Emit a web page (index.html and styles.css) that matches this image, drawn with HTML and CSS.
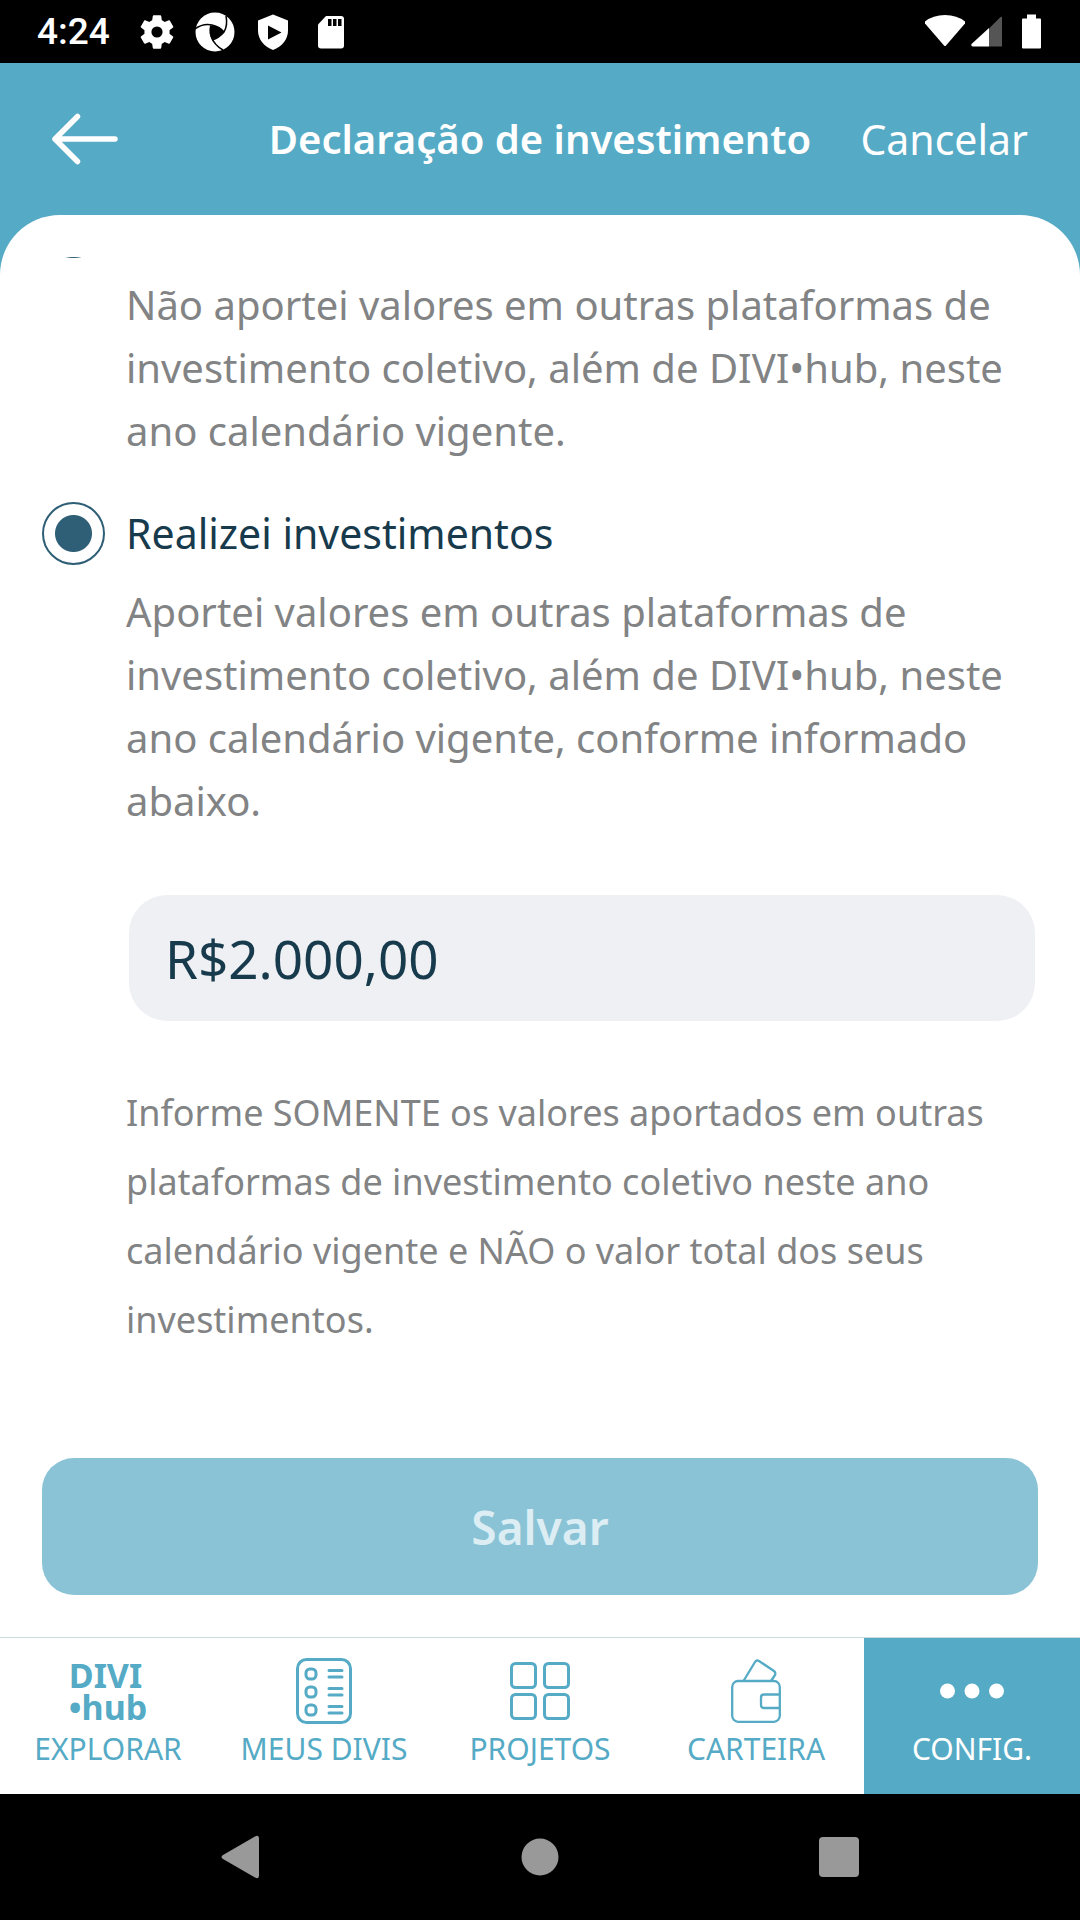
FILE: index.html
```html
<!DOCTYPE html>
<html lang="pt-BR">
<head>
<meta charset="utf-8">
<meta name="viewport" content="width=device-width, initial-scale=1">
<title>Declaração de investimento</title>
<link rel="stylesheet" href="styles.css">
</head>
<body>
<div class="app">
  <div class="status">
    <span class="status-time">4:24</span>
    <div class="status-icons">
      <svg width="42" height="42" viewBox="0 0 24 24" fill="currentColor"><path d="M19.14 12.94c.04-.3.06-.61.06-.94 0-.32-.02-.64-.07-.94l2.03-1.58c.18-.14.23-.41.12-.61l-1.92-3.32c-.12-.22-.37-.29-.59-.22l-2.39.96c-.5-.38-1.03-.7-1.62-.94l-.36-2.54c-.04-.24-.24-.41-.48-.41h-3.84c-.24 0-.43.17-.47.41l-.36 2.54c-.59.24-1.13.57-1.62.94l-2.39-.96c-.22-.08-.47 0-.59.22L2.74 8.87c-.12.21-.08.47.12.61l2.03 1.58c-.05.3-.09.63-.09.94s.02.64.07.94l-2.03 1.58c-.18.14-.23.41-.12.61l1.92 3.32c.12.22.37.29.59.22l2.39-.96c.5.38 1.03.7 1.62.94l.36 2.54c.05.24.24.41.48.41h3.84c.24 0 .44-.17.47-.41l.36-2.54c.59-.24 1.13-.56 1.62-.94l2.39.96c.22.08.47 0 .59-.22l1.92-3.32c.12-.22.07-.47-.12-.61l-2.01-1.58zM12 15.2a3.2 3.2 0 1 1 0-6.400a3.200 3.200 0 0 1 0 6.400z"/></svg>
      <svg width="42" height="42" viewBox="0 0 42 42"><circle cx="21" cy="21" r="19.500" fill="currentColor"/><path d="M16 14.500q8-1 14 6q-3 5-12 8q-4-6-2-14z" fill="#000"/><g fill="none" stroke="#000" stroke-width="1.500"><path d="M1 18q8-6 17-4q8 2 12 7"/><path d="M32 5q2 9-2 16q-5 6-12 8"/><path d="M17 25q3 9 12 14"/></g></svg>
      <svg width="42" height="42" viewBox="0 0 42 42"><path d="M21 3.500l15 6v10c0 9-6 16-15 19.500c-9-3.500-15-10.500-15-19.500v-10z" fill="currentColor"/><path d="M16 14.500v14l13.500-7z" fill="#000"/></svg>
      <svg width="42" height="42" viewBox="0 0 42 42"><path d="M16 5h15q3 0 3 3v26.500q0 3-3 3h-20q-3 0-3-3v-21z" fill="currentColor"/><path d="M18 8h3.500v7h-3.500zM23 8h3.500v7h-3.500zM28 8h3.500v7h-3.500z" fill="#000"/></svg>
    </div>
    <div class="status-right">
      <svg width="42" height="42" viewBox="0 0 42 42"><path d="M1 10.500Q9 4 21 4t20 6.500v2L22 34.500q-1 1-2 0L1 12.500z" fill="currentColor"/></svg>
      <svg width="42" height="42" viewBox="0 0 42 42"><path d="M23 17.500L34.500 6q1.500-1 1.500 1v28.500h-13z" fill="#555"/><path d="M23 17v18.500h-16.500q-2-1-1-2.500z" fill="currentColor"/></svg>
      <svg width="42" height="42" viewBox="0 0 42 42"><path d="M19 3.500h9v4h4q1 0 1 1v28q0 1-1 1h-17q-1 0-1-1v-28q0-1 1-1h4z" fill="currentColor"/></svg>
    </div>
  </div>

  <header class="header">
    <button class="back" type="button" aria-label="Voltar">
      <svg width="66" height="52" viewBox="0 0 66 52" fill="none" stroke="currentColor" stroke-width="5.500" stroke-linecap="round" stroke-linejoin="round"><path d="M25.500 3.500L3 26l22.500 22.500M3 26h60"/></svg>
    </button>
    <h1 class="title">Declaração de investimento</h1>
    <button class="cancel" type="button">Cancelar</button>
  </header>

  <form class="sheet">
    <div class="scroll">
      <div class="options">
        <div class="option">
          <div class="option-head"><input class="radio" type="radio" name="decl" aria-labelledby="opt-none"></div>
          <p class="option-text" id="opt-none">Não aportei valores em outras plataformas de investimento coletivo, além de DIVI•hub, neste ano calendário vigente.</p>
        </div>
        <div class="option">
          <div class="option-head"><input class="radio" type="radio" name="decl" id="opt-made" checked><label class="option-name" for="opt-made">Realizei investimentos</label></div>
          <p class="option-text">Aportei valores em outras plataformas de investimento coletivo, além de DIVI•hub, neste ano calendário vigente, conforme informado abaixo.</p>
        </div>
      </div>
      <input class="amount" type="text" value="R$2.000,00" aria-labelledby="note">
      <p class="note" id="note">Informe SOMENTE os valores aportados em outras plataformas de investimento coletivo neste ano calendário vigente e NÃO o valor total dos seus investimentos.</p>
    </div>
    <button class="save" type="submit" disabled>Salvar</button>
  </form>

  <nav class="tabs">
    <a class="tab" href="#explorar">
      <span class="tab-icon logo"><span>DIVI</span><span>•hub</span></span>
      <span>EXPLORAR</span>
    </a>
    <a class="tab" href="#divis">
      <span class="tab-icon"><svg width="56" height="66" viewBox="0 0 56 66" fill="none" stroke="currentColor" stroke-width="3" stroke-linecap="round"><rect x="1.500" y="1.500" width="53" height="63" rx="9"/><g><rect x="10" y="11" width="10" height="10" rx="4"/><rect x="10" y="29" width="10" height="10" rx="4"/><rect x="10" y="47" width="10" height="10" rx="4"/></g><path d="M33 12.500h13M33 19h13M33 30.500h13M33 37h13M33 48.500h13M33 55h13"/></svg></span>
      <span>MEUS DIVIS</span>
    </a>
    <a class="tab" href="#projetos">
      <span class="tab-icon"><svg width="60" height="58" viewBox="0 0 60 58" fill="none" stroke="currentColor" stroke-width="3"><rect x="1.500" y="1.500" width="24" height="24" rx="4"/><rect x="34.500" y="1.500" width="24" height="24" rx="4"/><rect x="1.500" y="32.500" width="24" height="24" rx="4"/><rect x="34.500" y="32.500" width="24" height="24" rx="4"/></svg></span>
      <span>PROJETOS</span>
    </a>
    <a class="tab" href="#carteira">
      <span class="tab-icon"><svg width="50" height="64" viewBox="0 0 50 64" fill="none" stroke="currentColor" stroke-width="2.300" stroke-linejoin="round"><rect x="1.200" y="22" width="47.600" height="40.800" rx="6"/><path d="M49 35.500h-16q-3 0-3 3v7.500q0 3 3 3h16M12.500 22L24 3q1.500-2.500 4-1L43 12q2 1.500 1 4l-4 6"/></svg></span>
      <span>CARTEIRA</span>
    </a>
    <a class="tab tab-active" href="#config" aria-current="page">
      <span class="tab-icon"><svg width="64" height="16" viewBox="0 0 64 16" fill="currentColor"><circle cx="7.500" cy="8" r="7.500"/><circle cx="32" cy="8" r="7.500"/><circle cx="56.500" cy="8" r="7.500"/></svg></span>
      <span>CONFIG.</span>
    </a>
  </nav>

  <div class="system">
    <button class="system-button" type="button" aria-label="Voltar"><svg width="40" height="44" viewBox="0 0 40 44"><path d="M2 20L34 1.500q4-2 4 2v37q0 4-4 2L2 24q-3-2 0-4z" fill="currentColor"/></svg></button>
    <button class="system-button" type="button" aria-label="Início"><svg width="40" height="40" viewBox="0 0 40 40"><circle cx="20" cy="20" r="18.500" fill="currentColor"/></svg></button>
    <button class="system-button" type="button" aria-label="Recentes"><svg width="40" height="40" viewBox="0 0 40 40"><rect width="40" height="40" rx="4" fill="currentColor"/></svg></button>
  </div>
</div>
</body>
</html>
```
FILE: styles.css
```css
* {
  box-sizing: border-box;
}

body {
  margin: 0;
  font-family: "Noto Sans", sans-serif;
  background: #55aac5;
}

button,
input {
  margin: 0;
  padding: 0;
  border: 0;
  background: none;
  font-family: inherit;
  color: inherit;
}

h1,
p {
  margin: 0;
}

svg {
  display: block;
}

.app {
  display: flex;
  flex-direction: column;
  min-height: 100vh;
}

/* Status bar */
.status {
  display: flex;
  align-items: center;
  height: 63px;
  padding: 0 30px 0 37px;
  background: #000;
  color: #fff;
}

.status-time {
  font: 500 37px/42px Roboto, sans-serif;
}

.status-icons {
  display: flex;
  gap: 16px;
  margin-left: 26px;
}

.status-right {
  display: flex;
  margin-left: auto;
}

/* Header */
.header {
  display: grid;
  grid-template-columns: 1fr auto 1fr;
  align-items: center;
  height: 152px;
  padding: 0 52px;
  color: #fff;
}

.back {
  justify-self: start;
}

.title {
  font-size: 40px;
  font-weight: 600;
  line-height: 60px;
}

.cancel {
  justify-self: end;
  font-size: 41px;
  line-height: 60px;
}

/* Form sheet */
.sheet {
  display: flex;
  flex: 1;
  flex-direction: column;
  padding: 42px;
  border-radius: 60px 60px 0 0;
  background: #fff;
}

.scroll {
  flex: 1;
  padding-left: 84px;
  overflow: hidden;
  color: #828384;
}

/* Scrolled so that only the lower edge of the first radio shows */
.options {
  display: flex;
  flex-direction: column;
  gap: 40px;
  margin-top: -62px;
  margin-left: -84px;
}

.option-head {
  display: flex;
  align-items: center;
  gap: 21px;
  height: 63px;
  margin-bottom: 15px;
}

.radio {
  width: 63px;
  height: 63px;
  border: 2px solid #2f5f76;
  border-radius: 50%;
  appearance: none;
}

.radio:checked {
  background: radial-gradient(circle, #2f5f76 18px, transparent 19px);
}

.option-name {
  font-size: 41px;
  line-height: 63px;
  color: #173a4c;
}

.option-text {
  padding-left: 84px;
  font-size: 40px;
  line-height: 63px;
}

.amount {
  display: block;
  width: calc(100% - 6px);
  height: 126px;
  margin: 63px 3px 57px;
  padding: 0 36px;
  border-radius: 38px;
  background: #eff0f4;
  font-size: 53px;
  color: #173a4c;
}

.note {
  font-size: 36px;
  line-height: 69px;
}

.save {
  height: 137px;
  border-radius: 32px;
  background: #8ac3d6;
  font-size: 46px;
  font-weight: 600;
  color: #dceef4;
}

/* Tab bar */
.tabs {
  display: grid;
  grid-template-columns: repeat(5, 1fr);
  height: 157px;
  border-top: 1px solid #cbdcdf;
  background: #fff;
}

.tab {
  display: flex;
  flex-direction: column;
  align-items: center;
  padding-top: 15px;
  font-size: 30px;
  line-height: 40px;
  color: #55aac5;
  text-decoration: none;
}

.tab-active {
  background: #55aac5;
  color: #fff;
}

.tab-icon {
  display: grid;
  place-items: center;
  height: 76px;
}

.logo {
  align-content: center;
  justify-items: start;
  font-size: 34px;
  font-weight: 700;
  line-height: 32px;
}

/* System navigation */
.system {
  display: flex;
  align-items: center;
  justify-content: center;
  gap: 259px;
  height: 126px;
  background: #000;
  color: #999;
}
```
